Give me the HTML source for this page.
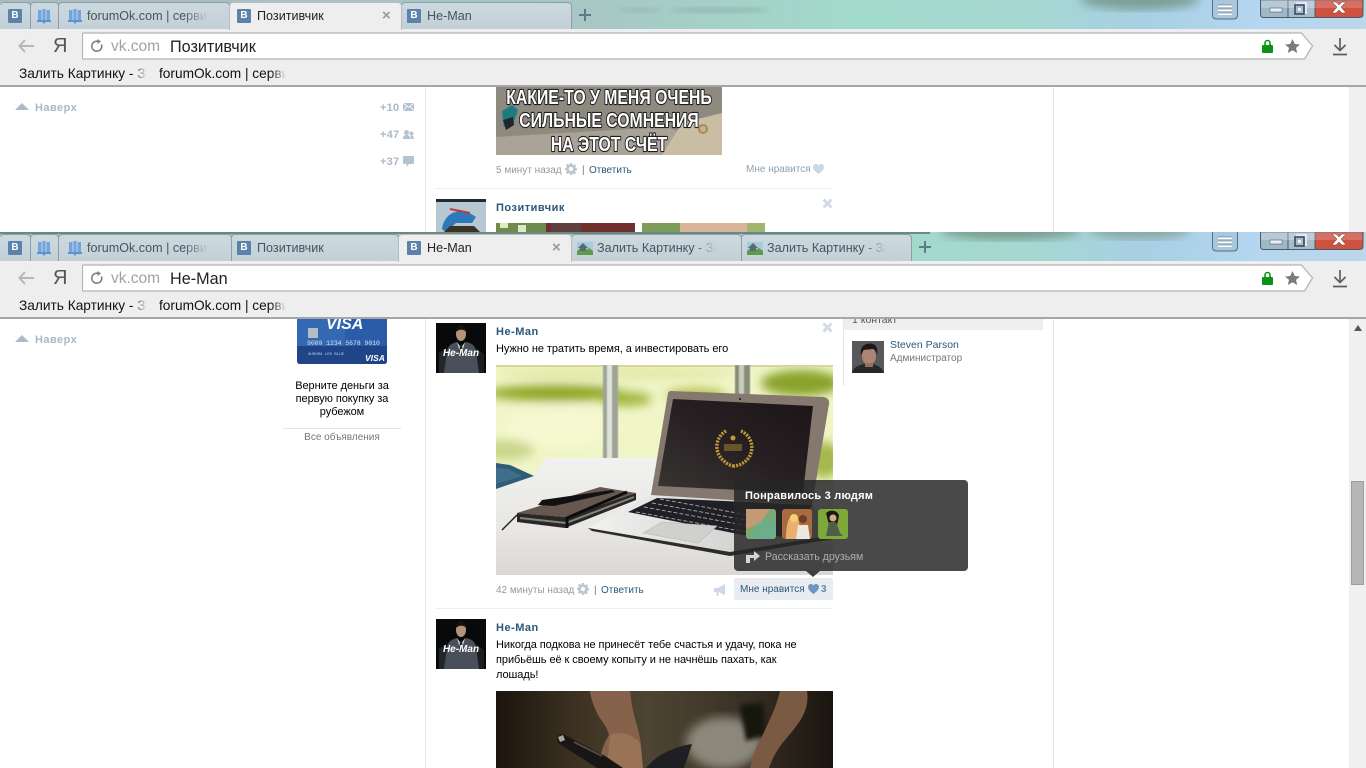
<!DOCTYPE html>
<html lang="ru"><head><meta charset="utf-8"><title>VK</title>
<style>
*{box-sizing:border-box}
html,body{margin:0;padding:0;width:1366px;height:768px;overflow:hidden;background:#fff;font-family:"Liberation Sans","DejaVu Sans",sans-serif}
.win{position:absolute;left:0;width:1366px;overflow:hidden;background:#fff}
.a{position:absolute;white-space:nowrap}
.wp{position:absolute;left:0;top:0;width:1366px;height:29px}
.tab{position:absolute;top:2px;height:27px;border:1px solid #8b9ea9;border-bottom:0;border-radius:4px 4px 0 0;background:linear-gradient(#ccd9df,#c3d0d8);overflow:hidden}
.tab.on{background:#eee;border-color:#b5bdc2;height:28px;z-index:2}
.tab .t{position:absolute;left:27px;top:6px;font-size:12.6px;line-height:14px;color:#46545e;white-space:nowrap;overflow:hidden;-webkit-mask-image:linear-gradient(90deg,#000 80%,transparent)}
.tab.on .t{color:#222}
.tab .x{position:absolute;top:5px;font-size:15px;line-height:15px;color:#999;font-weight:bold}
.vk{position:absolute;top:6px;width:14px;height:14px;background:#5b82ab;color:#fff;font:bold 10px/14px "Liberation Sans",sans-serif;text-align:center;border-radius:1px}
.bar{position:absolute;left:0;top:29px;width:1366px;height:58px;background:#eee;border-bottom:2px solid #a6a6a6}
.addr{position:absolute;left:82px;top:32px;width:1232px;height:28px}
.dom{position:absolute;left:111px;top:37px;font-size:15.5px;line-height:19px;color:#a2a2a2}
.ttl{position:absolute;left:170px;top:38px;font-size:16.2px;line-height:19px;color:#222}
.bm{position:absolute;top:66px;font-size:13.7px;line-height:16px;color:#111;overflow:hidden;white-space:nowrap;-webkit-mask-image:linear-gradient(90deg,#000 88%,transparent)}
.sb{position:absolute;left:1349px;top:87px;width:17px;bottom:0;background:#f0f0f0}
.vl{position:absolute;width:1px;background:#e3e5e8}
.s11{font-size:11px;line-height:14px;color:#000;letter-spacing:-.06px}
.nm{font-size:11px;line-height:14px;font-weight:bold;color:#2b587a;letter-spacing:.5px}
.gr{font-size:10px;line-height:13px;color:#999}
.ln{font-size:10px;line-height:13px;color:#2b587a}
.up{font-size:11px;line-height:14px;font-weight:bold;color:#aab8c8;letter-spacing:.45px}
</style></head><body>

<svg width="0" height="0" style="position:absolute">
<defs>
<filter id="b2"><feGaussianBlur stdDeviation="2"/></filter>
<filter id="b5"><feGaussianBlur stdDeviation="5"/></filter>
<filter id="b1"><feGaussianBlur stdDeviation=".6"/></filter>
<linearGradient id="w1" x1="0" x2="1" y1="0" y2="0"><stop offset="0" stop-color="#a9bcc2"/><stop offset=".42" stop-color="#a8c6c4"/><stop offset=".62" stop-color="#a2dacb"/><stop offset=".75" stop-color="#a4d8d0"/><stop offset=".84" stop-color="#a8cfe4"/><stop offset=".92" stop-color="#b4d6f0"/><stop offset="1" stop-color="#bcd6ea"/></linearGradient>
<symbol id="book" viewBox="0 0 16 16"><path d="M2 2h3.500v10H2zM6.500 1h3v11h-3zM10.500 2H14v10h-3.500z" fill="#72a4df"/><path d="M1 12h14v2H9.500L8 16l-1.500-2H1z" fill="#5a93d6"/></symbol>
<symbol id="pic" viewBox="0 0 16 13"><rect width="16" height="13" fill="#a8c9df"/><path d="M0 9l5-4 4 3 3-2 4 3v4H0z" fill="#5d9a4a"/><path d="M1 6l5-5 5 5H9v3H3V6z" fill="#5a6a70"/></symbol>
<symbol id="gear" viewBox="0 0 12 12"><path d="M5 0h2l.3 1.600 1.200.5L9.900 1.200l1.300 1.400-1 1.300.5 1.200 1.300.2v2l-1.500.3-.5 1.200.9 1.300-1.400 1.400-1.300-1-1.200.5L7 12H5l-.3-1.500-1.200-.5-1.300.9L.8 9.500l1-1.300-.5-1.200L0 7V5l1.400-.3.5-1.200-.9-1.300L2.400.8l1.300 1 1.100-.5zM6 3.800A2.200 2.200 0 1 0 6 8.200 2.200 2.200 0 0 0 6 3.800z" fill="#bcc6d0" fill-rule="evenodd"/></symbol>
<symbol id="heart" viewBox="0 0 12 11"><path d="M6 11C2 8 0 6 0 3.300 0 1.300 1.500 0 3.200 0 4.400 0 5.400.6 6 1.700 6.600.6 7.600 0 8.800 0 10.500 0 12 1.300 12 3.300 12 6 10 8 6 11z"/></symbol>
<symbol id="he" viewBox="0 0 50 50"><rect width="50" height="50" fill="#08090b"/><path d="M3 50V30l7-5v25z" fill="#23262b"/><path d="M40 50V25l8 6v19z" fill="#1b1d21"/><path d="M8 50l3-22c1-6 6-8 10-9l4 5 5-5c5 1 9 3 10 9l3 22z" fill="#4a505b"/><path d="M21 19l4 6 4-6-4 14z" fill="#ddd"/><path d="M24 22h2l1 9-2 2-2-2z" fill="#222"/><ellipse cx="25" cy="11" rx="5" ry="7" fill="#b4937c"/><path d="M20 9c0-5 3-7 5-7s6 2 5 7c-1-3-8-3-10 0z" fill="#161210"/></symbol>
<symbol id="wc" viewBox="0 0 104 18"><path d="M.5 0v14q0 3.500 3.500 3.500h24V0z" fill="#9fb7c7" stroke="#485c68"/><path d="M28 0h27v17.500H28z" fill="#a7bdcc" stroke="#485c68"/><path d="M55 0h48v14q0 3.500-3.500 3.500H55z" fill="#cf5140" stroke="#485c68"/><rect x="1" y="0" width="54" height="8" fill="#fff" opacity=".25"/><rect x="55" y="0" width="47" height="8" fill="#fff" opacity=".18"/><rect x="10" y="8" width="12" height="4" fill="#e9eef2" stroke="#4c5e6b" stroke-width=".6"/><rect x="37" y="3" width="9" height="10" fill="none" stroke="#eef" stroke-width="1.600"/><rect x="35" y="5" width="9" height="9" fill="#a7bdcc" stroke="#334752" stroke-width="1.500"/><rect x="38" y="8" width="3" height="3" fill="#eef"/><path d="M72 2h4l3 3 3-3h4l-5 5 5 6h-4l-3-3-3 3h-4l5-6z" fill="#fff" stroke="#6d3a30" stroke-width=".5"/></symbol>
<symbol id="mn" viewBox="0 0 26 20"><path d="M.5 0v15q0 4 4 4h17q4 0 4-4V0" fill="#a9c6dc" stroke="#54707f"/><path d="M6 6h14M6 10h14M6 14h14" stroke="#fff" stroke-width="2"/><path d="M6 5h14M6 9h14M6 13h14" stroke="#3e5563" stroke-width=".6"/></symbol>
</defs>
</svg>

<!-- ============ UPPER WINDOW ============ -->
<div class="win" style="top:0;height:232px">
 <svg class="wp" viewBox="0 0 1366 29" preserveAspectRatio="none">
  <rect width="1366" height="29" fill="url(#w1)"/>
  <ellipse cx="1140" cy="-1" rx="60" ry="11" fill="#7d9f96" filter="url(#b5)"/>
  <ellipse cx="720" cy="10" rx="50" ry="3" fill="#8aa8a0" filter="url(#b2)" opacity=".5"/>
  <ellipse cx="640" cy="10" rx="22" ry="3" fill="#8aa8a0" filter="url(#b2)" opacity=".35"/>
 </svg>
 <div class="tab" style="left:0;width:31px;border-left:0"><div class="vk" style="left:8px">В</div></div>
 <div class="tab" style="left:30px;width:29px"><svg class="a" style="left:5px;top:5px" width="16" height="16"><use href="#book"/></svg></div>
 <div class="tab" style="left:58px;width:172px"><svg class="a" style="left:8px;top:5px" width="16" height="16"><use href="#book"/></svg><div class="t" style="left:28px;width:121px">forumOk.com | сервис</div></div>
 <div class="tab on" style="left:229px;width:173px"><div class="vk" style="left:7px">В</div><div class="t" style="width:120px">Позитивчик</div><div class="x" style="left:152px">×</div></div>
 <div class="tab" style="left:401px;width:171px"><div class="vk" style="left:5px">В</div><div class="t" style="left:25px;width:120px">He-Man</div></div>
 <svg class="a" style="left:578px;top:8px" width="14" height="14"><path d="M7 1v12M1 7h12" stroke="#5c7a88" stroke-width="2"/></svg>
 <svg class="a" style="left:1212px;top:0" width="26" height="20"><use href="#mn"/></svg>
 <svg class="a" style="left:1260px;top:0" width="104" height="18"><use href="#wc"/></svg>
 <div class="bar"></div>
 <svg class="addr" viewBox="0 0 1232 28"><path d="M1.500 1h1218l11 13-8 13H1.500q-1 0-1-1V2q0-1 1-1z" fill="#fff" stroke="#b2b2b2" stroke-width="1.200"/></svg>
 <svg class="a" style="left:18px;top:39px" width="16" height="14"><path d="M7 1L1.500 7 7 13M2 7h14" fill="none" stroke="#b6b6b6" stroke-width="2"/></svg>
 <div class="a" style="left:53px;top:36px;font-size:20px;line-height:21px;color:#555">Я</div>
 <svg class="a" style="left:90px;top:38px" width="15" height="16"><path d="M11.500 6.500a5 5 0 1 1-3-3" fill="none" stroke="#808080" stroke-width="1.600"/><path d="M7.500 1l3.500 2.500L7.500 6z" fill="#808080"/></svg>
 <div class="dom">vk.com</div><div class="ttl">Позитивчик</div>
 <svg class="a" style="left:1262px;top:39px" width="11" height="14"><path d="M3 6V4a2.500 2.500 0 0 1 5 0v2" fill="none" stroke="#0c9214" stroke-width="1.600"/><rect y="6" width="11" height="8" rx="1" fill="#0c9214"/></svg>
 <svg class="a" style="left:1285px;top:39px" width="15" height="14"><path d="M7.500 0l2.300 5 5.200.5-4 3.400L12.200 14 7.500 11.200 2.800 14 4 8.900 0 5.500 5.200 5z" fill="#7b7b7b"/></svg>
 <svg class="a" style="left:1333px;top:38px" width="14" height="18"><path d="M7 0v12M1.500 7L7 12.500 12.500 7" fill="none" stroke="#5f5f5f" stroke-width="1.700"/><path d="M0 16.500h14" stroke="#5f5f5f" stroke-width="1.800"/></svg>
 <div class="bm" style="left:19px;width:128px">Залить Картинку - Залить</div>
 <div class="bm" style="left:159px;width:127px">forumOk.com | сервис</div>

 <div class="vl" style="left:425px;top:87px;height:145px"></div>
 <div class="vl" style="left:1053px;top:87px;height:145px"></div>
 <div class="sb"></div>
 <svg class="a" style="left:15px;top:103px" width="14" height="7"><path d="M7 0l7 7H0z" fill="#a9bccb"/></svg>
 <div class="a up" style="left:35px;top:101px">Наверх</div>
 <div class="a up" style="left:380px;top:101px;letter-spacing:.2px">+10</div>
 <div class="a up" style="left:380px;top:128px;letter-spacing:.2px">+47</div>
 <div class="a up" style="left:380px;top:155px;letter-spacing:.2px">+37</div>
 <svg class="a" style="left:403px;top:103px" width="11" height="8"><rect width="11" height="8" fill="#b4c3d2"/><path d="M0 0l5.500 4.500L11 0M0 8l4-5M11 8L7 3" fill="none" stroke="#fff" stroke-width=".8"/></svg>
 <svg class="a" style="left:403px;top:130px" width="11" height="9"><circle cx="3.500" cy="2.500" r="2.500" fill="#b4c3d2"/><circle cx="8.500" cy="3.500" r="2" fill="#b4c3d2"/><path d="M0 9c0-3 1-4 3.500-4S7 6 7 9zM7.500 9c0-2 0-3.500 1.200-3.500S11 7 11 9z" fill="#b4c3d2"/></svg>
 <svg class="a" style="left:403px;top:156px" width="11" height="11"><path d="M1 0h9q1 0 1 1v6q0 1-1 1H6L3.500 11V8H1Q0 8 0 7V1q0-1 1-1z" fill="#b4c3d2"/></svg>

 <svg class="a" style="left:496px;top:87px" width="226" height="68" viewBox="0 0 226 68">
  <rect width="226" height="68" fill="#8f8a80"/>
  <path d="M0 50L170 40 226 60v8H0z" fill="#a8a297"/>
  <path d="M166 68l20-32 40-10v42z" fill="#c9bda3"/>
  <circle cx="207" cy="42" r="5" fill="#a48a5c"/><circle cx="207" cy="42" r="3" fill="#c9b48a"/>
  <path d="M6 24l10-6 6 5-5 14-9 3z" fill="#1d7a80" filter="url(#b1)"/>
  <path d="M7 33l10-3 1 8-8 5z" fill="#20262a"/>
  <g font-family="Liberation Sans" font-weight="bold" font-size="20" fill="#fff" stroke="#1d1d1d" stroke-width="2.200" stroke-linejoin="round" paint-order="stroke" text-anchor="middle">
   <text x="0" y="0" transform="translate(113,17) scale(.79,1)">КАКИЕ-ТО У МЕНЯ ОЧЕНЬ</text>
   <text x="0" y="0" transform="translate(113,40) scale(.79,1)">СИЛЬНЫЕ СОМНЕНИЯ</text>
   <text x="0" y="0" transform="translate(113,64) scale(.79,1)">НА ЭТОТ СЧЁТ</text>
  </g>
 </svg>
 <div class="a gr" style="left:496px;top:164px">5 минут назад</div>
 <svg class="a" style="left:565px;top:163px" width="12" height="12"><use href="#gear"/></svg>
 <div class="a gr" style="left:582px;top:164px;color:#777">|</div>
 <div class="a ln" style="left:589px;top:164px">Ответить</div>
 <div class="a gr" style="left:746px;top:163px;color:#8fa0ae">Мне нравится</div>
 <svg class="a" style="left:813px;top:164px;color:#c9d8e8" width="11" height="10" fill="currentColor"><use href="#heart"/></svg>
 <div class="a" style="left:436px;top:188px;width:397px;height:1px;background:#edeef0"></div>
 <svg class="a" style="left:436px;top:199px" width="50" height="33" viewBox="0 0 50 33"><rect width="50" height="33" fill="#6f8ea6"/><rect width="50" height="3" fill="#1e2a33"/><rect y="3" width="50" height="30" fill="#b7c8d2"/><path d="M6 30C8 14 24 6 40 18l-4 6H20L10 33z" fill="#2d79ba"/><path d="M14 10l20 4" stroke="#c43a3a" stroke-width="2"/><path d="M8 33l6-6h24l6 6z" fill="#3a3226"/></svg>
 <div class="a nm" style="left:496px;top:201px">Позитивчик</div>
 <svg class="a" style="left:822px;top:198px" width="11" height="11"><path d="M1.500 1.500l8 8M9.500 1.500l-8 8" stroke="#d2dbe4" stroke-width="3"/></svg>
 <svg class="a" style="left:496px;top:223px" width="139" height="9"><rect width="139" height="9" fill="#6f2f2c"/><rect width="50" height="9" fill="#6f8a4c"/><rect x="55" width="30" height="9" fill="#5f4040"/><path d="M4 0h8v5H4zM22 2h8v7h-8z" fill="#dde8c4"/></svg>
 <svg class="a" style="left:642px;top:223px" width="123" height="9"><rect width="123" height="9" fill="#d8b49a"/><rect width="38" height="9" fill="#7c9c58"/><rect x="105" width="18" height="9" fill="#a2b56c"/></svg>
</div>

<!-- ============ LOWER WINDOW ============ -->
<div class="win" style="top:232px;height:536px">
 <svg class="wp" viewBox="0 0 1366 29" preserveAspectRatio="none"><rect width="1366" height="29" fill="url(#w1)"/>
  <ellipse cx="1010" cy="-2" rx="70" ry="10" fill="#7a9c92" filter="url(#b5)"/>
  <ellipse cx="1140" cy="-2" rx="50" ry="9" fill="#88a8a0" filter="url(#b5)"/>
  <rect width="930" height="2" fill="#6a8a80"/>
 </svg>
 <div class="tab" style="left:0;width:31px;border-left:0"><div class="vk" style="left:8px">В</div></div>
 <div class="tab" style="left:30px;width:29px"><svg class="a" style="left:5px;top:5px" width="16" height="16"><use href="#book"/></svg></div>
 <div class="tab" style="left:58px;width:174px"><svg class="a" style="left:8px;top:5px" width="16" height="16"><use href="#book"/></svg><div class="t" style="left:28px;width:121px">forumOk.com | сервис</div></div>
 <div class="tab" style="left:231px;width:168px"><div class="vk" style="left:5px">В</div><div class="t" style="left:25px;width:120px">Позитивчик</div></div>
 <div class="tab on" style="left:398px;width:174px"><div class="vk" style="left:8px">В</div><div class="t" style="left:28px;width:120px">He-Man</div><div class="x" style="left:153px">×</div></div>
 <div class="tab" style="left:571px;width:171px"><svg class="a" style="left:5px;top:7px" width="16" height="13"><use href="#pic"/></svg><div class="t" style="left:25px;width:120px">Залить Картинку - Залить</div></div>
 <div class="tab" style="left:741px;width:171px"><svg class="a" style="left:5px;top:7px" width="16" height="13"><use href="#pic"/></svg><div class="t" style="left:25px;width:120px">Залить Картинку - Залить</div></div>
 <svg class="a" style="left:918px;top:8px" width="14" height="14"><path d="M7 1v12M1 7h12" stroke="#5c7a88" stroke-width="2"/></svg>
 <svg class="a" style="left:1212px;top:0" width="26" height="20"><use href="#mn"/></svg>
 <svg class="a" style="left:1260px;top:0" width="104" height="18"><use href="#wc"/></svg>
 <div class="bar"></div>
 <svg class="addr" viewBox="0 0 1232 28"><path d="M1.500 1h1218l11 13-8 13H1.500q-1 0-1-1V2q0-1 1-1z" fill="#fff" stroke="#b2b2b2" stroke-width="1.200"/></svg>
 <svg class="a" style="left:18px;top:39px" width="16" height="14"><path d="M7 1L1.500 7 7 13M2 7h14" fill="none" stroke="#b6b6b6" stroke-width="2"/></svg>
 <div class="a" style="left:53px;top:36px;font-size:20px;line-height:21px;color:#555">Я</div>
 <svg class="a" style="left:90px;top:38px" width="15" height="16"><path d="M11.500 6.500a5 5 0 1 1-3-3" fill="none" stroke="#808080" stroke-width="1.600"/><path d="M7.500 1l3.500 2.500L7.500 6z" fill="#808080"/></svg>
 <div class="dom">vk.com</div><div class="ttl">He-Man</div>
 <svg class="a" style="left:1262px;top:39px" width="11" height="14"><path d="M3 6V4a2.500 2.500 0 0 1 5 0v2" fill="none" stroke="#0c9214" stroke-width="1.600"/><rect y="6" width="11" height="8" rx="1" fill="#0c9214"/></svg>
 <svg class="a" style="left:1285px;top:39px" width="15" height="14"><path d="M7.500 0l2.300 5 5.200.5-4 3.400L12.200 14 7.500 11.200 2.800 14 4 8.900 0 5.500 5.200 5z" fill="#7b7b7b"/></svg>
 <svg class="a" style="left:1333px;top:38px" width="14" height="18"><path d="M7 0v12M1.500 7L7 12.500 12.500 7" fill="none" stroke="#5f5f5f" stroke-width="1.700"/><path d="M0 16.500h14" stroke="#5f5f5f" stroke-width="1.800"/></svg>
 <div class="bm" style="left:19px;width:128px">Залить Картинку - Залить</div>
 <div class="bm" style="left:159px;width:127px">forumOk.com | сервис</div>

 <div class="vl" style="left:425px;top:87px;height:449px"></div>
 <div class="vl" style="left:1053px;top:87px;height:449px"></div>
 <div class="sb"></div>
 <svg class="a" style="left:1354px;top:93px" width="8" height="6"><path d="M4 0l4 6H0z" fill="#555"/></svg>
 <div class="a" style="left:1351px;top:249px;width:13px;height:104px;background:#b6b6b6;border:1px solid #9d9d9d"></div>
 <svg class="a" style="left:15px;top:103px" width="14" height="7"><path d="M7 0l7 7H0z" fill="#a9bccb"/></svg>
 <div class="a up" style="left:35px;top:101px">Наверх</div>

 <!-- ad -->
 <svg class="a" style="left:297px;top:87px" width="90" height="45" viewBox="0 0 90 45">
  <path d="M0 0h90v42q0 3-3 3H3q-3 0-3-3z" fill="#1f4488"/><rect width="90" height="27" fill="#2a5ca8"/><rect width="48" height="27" fill="#3369b3"/>
  <text x="29" y="10" font-family="Liberation Sans" font-weight="bold" font-style="italic" font-size="16" fill="#fff">VISA</text>
  <rect x="11" y="9" width="10" height="10" fill="#b5bcc6"/>
  <text x="10" y="26" font-family="Liberation Mono" font-size="6.400" fill="#dbe4f0">9000 1234 5678 9010</text>
  <text x="11" y="36" font-family="Liberation Mono" font-size="4" fill="#c4d1e5">AURORA LEE BLUE</text>
  <text x="68" y="42" font-family="Liberation Sans" font-weight="bold" font-style="italic" font-size="8.500" fill="#fff">VISA</text>
 </svg>
 <div class="a s11" style="left:282px;width:120px;top:148px;text-align:center;line-height:13px">Верните деньги за<br>первую покупку за<br>рубежом</div>
 <div class="a" style="left:283px;top:196px;width:118px;height:1px;background:#e3e5e8"></div>
 <div class="a" style="left:282px;width:120px;top:199px;text-align:center;font-size:10px;line-height:13px;color:#777">Все объявления</div>

 <!-- post 1 -->
 <svg class="a" style="left:436px;top:91px" width="50" height="50"><use href="#he"/><text x="25" y="33" text-anchor="middle" font-family="Liberation Sans" font-weight="bold" font-style="italic" font-size="10" fill="#fff">He-Man</text></svg>
 <div class="a nm" style="left:496px;top:93px">He-Man</div>
 <svg class="a" style="left:822px;top:90px" width="11" height="11"><path d="M1.500 1.500l8 8M9.500 1.500l-8 8" stroke="#d2dbe4" stroke-width="3"/></svg>
 <div class="a s11" style="left:496px;top:110px">Нужно не тратить время, а инвестировать его</div>

 <svg class="a" style="left:496px;top:133px" width="337" height="210" viewBox="0 0 337 210">
  <defs>
   <linearGradient id="tb" x1="0" x2="0" y1="0" y2="1"><stop offset="0" stop-color="#f1f1ef"/><stop offset=".6" stop-color="#e8e7e5"/><stop offset="1" stop-color="#dad8d4"/></linearGradient>
   <linearGradient id="sc" x1="0" x2="1" y1="1" y2="0"><stop offset="0" stop-color="#3a3534"/><stop offset=".5" stop-color="#262022"/><stop offset="1" stop-color="#1d1517"/></linearGradient>
   <linearGradient id="bs" x1="0" x2="1"><stop offset="0" stop-color="#f2f2f0"/><stop offset="1" stop-color="#c0c0be"/></linearGradient>
  </defs>
  <rect width="337" height="210" fill="#f0f5c6"/>
  <g filter="url(#b5)">
   <ellipse cx="60" cy="28" rx="70" ry="8" fill="#8ea422"/>
   <ellipse cx="130" cy="34" rx="26" ry="7" fill="#a0b53c"/>
   <ellipse cx="200" cy="30" rx="30" ry="7" fill="#b4c050"/>
   <ellipse cx="305" cy="18" rx="40" ry="13" fill="#8aa22c"/>
   <ellipse cx="120" cy="8" rx="120" ry="6" fill="#e0e8a4"/>
   <ellipse cx="65" cy="62" rx="60" ry="20" fill="#f6f8d0"/>
   <ellipse cx="200" cy="65" rx="50" ry="16" fill="#f2f5c4"/>
   <ellipse cx="10" cy="85" rx="28" ry="10" fill="#c9d68a"/>
   <ellipse cx="328" cy="95" rx="18" ry="18" fill="#a4b84c"/>
  </g>
  <rect width="337" height="2" fill="#d9d59f"/>
  <g filter="url(#b1)">
   <rect x="107" y="0" width="15" height="96" fill="#9fa498"/><rect x="111" y="0" width="5" height="96" fill="#dfe3d8"/>
   <rect x="239" y="0" width="15" height="30" fill="#888c7a"/><rect x="243" y="0" width="5" height="30" fill="#c9cdbb"/>
  </g>
  <!-- table -->
  <path d="M0 123L37 110 50 93H170L337 120V210H0z" fill="url(#tb)"/>
  <path d="M0 98l14 2 24 11-38 13z" fill="#2f5d78"/>
  <path d="M0 103l12 1 14 7-26 8z" fill="#4a7a94" opacity=".6"/>
  <!-- laptop base -->
  <path d="M92 163L155 130 316 138 337 170 234 187z" fill="url(#bs)"/>
  <path d="M92 163l142 24 103-17v4L234 191 96 166z" fill="#2e2c2a"/>
  <path d="M132 147L161 133 316 140 300 172 247 170z" fill="#1f1f25"/>
  <g stroke="#c9c9c9" stroke-width=".9" stroke-dasharray="4 2" opacity=".8"><path d="M140 147l110 20M148 142l110 20M156 138l110 20M164 134l110 20"/></g>
  <path d="M147 168L166 157 221 161 202 178z" fill="#d0d0ce" stroke="#b6b6b4" stroke-width=".6"/>
  <!-- lid -->
  <path d="M172 28Q173 26 175 26L327 32Q334 33 333 39L316 140 155 130z" fill="#85786f"/>
  <path d="M177 34L317 41 307 128 162 121z" fill="url(#sc)"/>
  <circle cx="244" cy="34" r="1" fill="#111"/>
  <g fill="none" stroke="#c29a3c" stroke-width="3.400" stroke-dasharray="2 1.200"><path d="M230 66a18 18 0 0 0-2 30 18 18 0 0 0 9 5"/><path d="M245 66a18 18 0 0 1 2 32 18 18 0 0 1-10 3"/></g>
  <rect x="228" y="79" width="18" height="7" fill="#b99437" opacity=".45"/>
  <circle cx="237" cy="73" r="2.500" fill="#c29a3c"/>
  <!-- notebook -->
  <path d="M21 148L104 122 140 128 69 152z" fill="#66574f"/>
  <path d="M21 148L69 152 140 128v7L69 163 21 157z" fill="#2a2826"/>
  <path d="M24 153L70 158 138 132" stroke="#86857d" stroke-width="2" fill="none"/>
  <path d="M71 152v11M71 153L131 127" stroke="#0d0d0d" stroke-width="3" fill="none"/>
  <path d="M21 150L6 165" stroke="#222" stroke-width="1.500"/>
  <path d="M42 140L46 135 116 125 119 127 58 141z" fill="#111"/>
 </svg>

 <div class="a gr" style="left:496px;top:352px">42 минуты назад</div>
 <svg class="a" style="left:577px;top:351px" width="12" height="12"><use href="#gear"/></svg>
 <div class="a gr" style="left:594px;top:352px;color:#777">|</div>
 <div class="a ln" style="left:601px;top:352px">Ответить</div>
 <svg class="a" style="left:714px;top:352px" width="12" height="12"><path d="M0 4h4l7-4v11L4 8l1 4H3L2 8H0z" fill="#cdd9e6"/></svg>
 <div class="a" style="left:734px;top:346px;width:99px;height:22px;background:#e9edf2;border-radius:2px"></div>
 <div class="a ln" style="left:740px;top:351px">Мне нравится</div>
 <svg class="a" style="left:808px;top:352px;color:#6f96c2" width="11" height="10" fill="currentColor"><use href="#heart"/></svg>
 <div class="a ln" style="left:821px;top:351px;color:#5f86ad;font-weight:bold">3</div>

 <!-- tooltip -->
 <div class="a" style="left:734px;top:248px;width:234px;height:91px;background:rgba(38,38,38,.84);border-radius:4px"></div>
 <svg class="a" style="left:806px;top:339px" width="14" height="6"><path d="M0 0h14L7 6z" fill="#3e3e3e"/></svg>
 <div class="a" style="left:745px;top:257px;font-size:11px;line-height:14px;font-weight:bold;color:#fff;letter-spacing:.22px">Понравилось 3 людям</div>
 <svg class="a" style="left:746px;top:277px" width="30" height="30"><rect width="30" height="30" rx="3" fill="#7ea872"/><path d="M0 0h24L14 14 0 20z" fill="#c49a76"/><path d="M4 30l8-16 14-6 4 10v8q0 4-4 4z" fill="#6dae8a"/></svg>
 <svg class="a" style="left:782px;top:277px" width="30" height="30"><rect width="30" height="30" rx="3" fill="#a86a3e"/><path d="M4 30c0-12 2-24 8-24 5 0 6 10 6 24z" fill="#e9b06f"/><ellipse cx="12" cy="9" rx="4" ry="4" fill="#f1d27a"/><circle cx="21" cy="10" r="4" fill="#6e3f28"/><path d="M14 30l2-14h10l2 14z" fill="#ece7df"/></svg>
 <svg class="a" style="left:818px;top:277px" width="30" height="30"><rect width="30" height="30" rx="3" fill="#7fa83a"/><path d="M8 4c4-4 12-3 13 3l-2 9h-8z" fill="#1d1a14"/><circle cx="15" cy="9" r="3.500" fill="#d8aa87"/><path d="M8 27l3-14h7l4 11 3 3z" fill="#4e5f48"/></svg>
 <svg class="a" style="left:746px;top:318px" width="15" height="13"><path d="M0 5h8V1l6 5-6 5V8H4v5H0z" fill="#d5d5d5"/></svg>
 <div class="a" style="left:765px;top:318px;font-size:10.6px;line-height:14px;color:#aeaeae">Рассказать друзьям</div>

 <!-- contacts -->
 <div class="a" style="left:844px;top:87px;width:199px;height:11px;background:#eee;overflow:hidden"><div class="a" style="left:8px;top:-5px;font-size:10.5px;line-height:13px;color:#555">1 контакт</div></div>
 <div class="vl" style="left:843px;top:87px;height:67px"></div>
 <svg class="a" style="left:852px;top:109px" width="32" height="32" viewBox="0 0 32 32"><rect width="32" height="32" fill="#59595b"/><path d="M0 32c2-7 8-8 12-9h8c5 1 10 3 12 9z" fill="#26272a"/><ellipse cx="17" cy="15" rx="7" ry="9" fill="#ad8574"/><path d="M9 14C7 5 15 1 21 3c4 1 5 6 4 11-1-4-2-6-5-6-4 1-8 0-9 2z" fill="#1d1817"/><rect x="13" y="22" width="8" height="4" fill="#96705f"/></svg>
 <div class="a" style="left:890px;top:106px;font-size:10.5px;line-height:14px;color:#2b587a">Steven Parson</div>
 <div class="a" style="left:890px;top:121px;font-size:10px;line-height:12px;color:#777">Администратор</div>

 <div class="a" style="left:436px;top:376px;width:397px;height:1px;background:#edeef0"></div>

 <!-- post 2 -->
 <svg class="a" style="left:436px;top:387px" width="50" height="50"><use href="#he"/><text x="25" y="33" text-anchor="middle" font-family="Liberation Sans" font-weight="bold" font-style="italic" font-size="10" fill="#fff">He-Man</text></svg>
 <div class="a nm" style="left:496px;top:389px">He-Man</div>
 <div class="a s11" style="left:496px;top:406px;line-height:15px">Никогда подкова не принесёт тебе счастья и удачу, пока не<br>прибьёшь её к своему копыту и не начнёшь пахать, как<br>лошадь!</div>
 <svg class="a" style="left:496px;top:459px" width="337" height="77" viewBox="0 0 337 77">
  <defs><linearGradient id="fg" x1="0" x2="1"><stop offset="0" stop-color="#1c150e"/><stop offset=".25" stop-color="#3e3322"/><stop offset=".45" stop-color="#4e4432"/><stop offset=".7" stop-color="#3c3428"/><stop offset="1" stop-color="#1b1510"/></linearGradient></defs>
  <rect width="337" height="77" fill="url(#fg)"/>
  <ellipse cx="228" cy="52" rx="38" ry="26" fill="#9a978a" filter="url(#b5)" opacity=".85"/>
  <path d="M244 14l23-2 3 32-20 6z" fill="#17130f" filter="url(#b2)"/>
  <path d="M94 0h40c1 8 2 16 4 24 3 10 6 20 7 30l2 23h-43c-1-10 2-22 9-33-2-8-6-12-11-20-4-8-7-16-8-24z" fill="#86624a"/>
  <path d="M114 44c8-4 22-2 30 8l3 25h-36z" fill="#9a7256"/>
  <path d="M284 0h27c2 12-2 24-10 34-8 12-20 20-28 43h-19c2-12 6-20 10-27 6-14 16-32 20-50z" fill="#7a5a42"/>
  <path d="M61 45l6-2 42 22 18 12h-26L62 52z" fill="#191715"/>
  <path d="M62 46l5-2 2 5-5 2z" fill="#a8a49c"/>
  <path d="M78 51l28 14" stroke="#4e4a44" stroke-width="2"/>
  <path d="M150 77c8-10 22-20 46-24l-8 24z" fill="#1d1f22"/>
 </svg>
</div>
</body></html>
